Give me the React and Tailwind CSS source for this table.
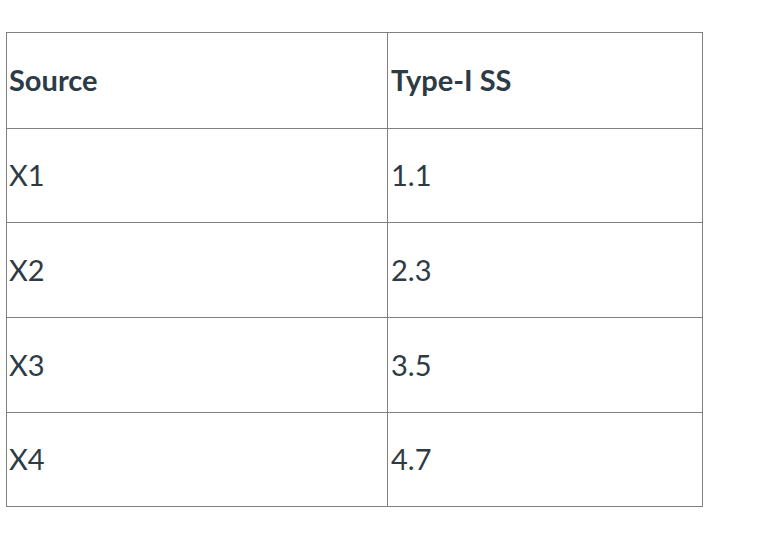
export default function App() {
  const rows = [
    ["X1", "1.1", "h-[94px]"],
    ["X2", "2.3", "h-[95px]"],
    ["X3", "3.5", "h-[95px]"],
    ["X4", "4.7", "h-[94px]"],
  ];
  return (
    <div
      className="w-[770px] h-[536px] bg-white pt-[32px] pl-[6px]"
      style={{ fontFamily: "Lato, 'Noto Sans', sans-serif" }}
    >
      <div className="w-[697px] border border-[#808080] text-[#2d3b45] text-[29px] leading-none">
        <div className="grid grid-cols-[380px_1fr] h-[95px]">
          <div className="flex items-center pl-[2px] pb-[2px] font-bold">Source</div>
          <div className="flex items-center pl-[3px] pb-[2px] font-bold border-l border-[#808080]">Type-I SS</div>
        </div>
        {rows.map(([a, b, h]) => (
          <div key={a} className={`grid grid-cols-[380px_1fr] border-t border-[#808080] ${h}`}>
            <div className="flex items-center pl-[2px] pb-[2px]">{a}</div>
            <div className="flex items-center pl-[3px] pb-[2px] border-l border-[#808080]">{b}</div>
          </div>
        ))}
      </div>
    </div>
  );
}
